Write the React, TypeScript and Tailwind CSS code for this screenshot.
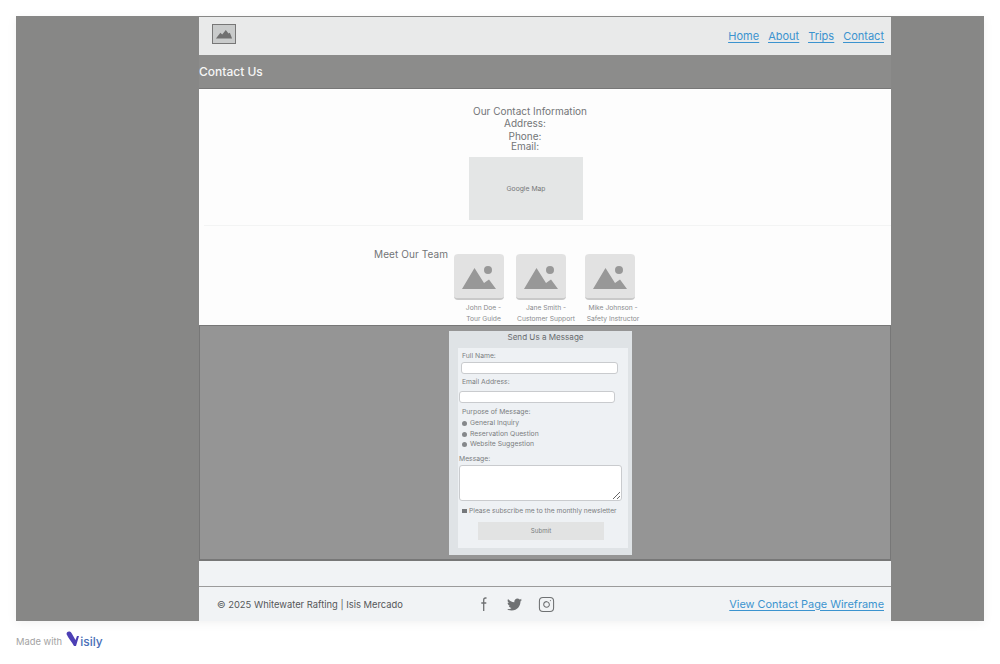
import { Instagram } from "lucide-react";
import { FaTwitter } from "react-icons/fa";

const team = [
  { name: "John Doe -", role: "Tour Guide", left: "ml-0", caption: "ml-[9px]" },
  { name: "Jane Smith -", role: "Customer Support", left: "ml-3", caption: "ml-[10px]" },
  { name: "Mike Johnson -", role: "Safety Instructor", left: "ml-[19px]", caption: "ml-[6px]" },
];

function MountainIcon() {
  return (
    <svg viewBox="0 0 50 46" className="h-[46px] w-[50px]">
      <path d="M8 35 L20.500 14 L30 29 L35 25.500 L42 35 Z" fill="#989898" />
      <circle cx="34" cy="16" r="4" fill="#989898" />
    </svg>
  );
}

function Radio({ label, dotClass }: { label: string; dotClass: string }) {
  return (
    <div className="flex h-[10.500px] items-center">
      <span className={`size-[5px] shrink-0 rounded-full bg-[#85888b] ${dotClass}`} />
      <span className="ml-[3px] text-[6.800px] leading-[10px] text-[#7b7e81]">{label}</span>
    </div>
  );
}

export default function App() {
  return (
    <div className="h-[664px] w-[1000px] overflow-hidden bg-white font-['Inter',sans-serif]">
      <div className="mx-4 mt-4 flex h-[605px] w-[968px] bg-[#878786] pl-[183px] pt-px shadow-[0_2px_10px_rgba(0,0,0,0.06)]">
        <div className="flex w-[692px] flex-col">
          <nav className="flex h-[38px] shrink-0 items-center justify-between bg-[#e9eaea] pl-[13px] pr-[7px]">
            <div className="mb-[4px] flex h-[20px] w-[24px] items-center justify-center border border-[#777] bg-[#c9cbcb]">
              <svg viewBox="0 0 24 20" className="h-[18px] w-[22px]">
                <path d="M3 15 L8 8.500 L10 10.500 L14 5.500 L17 9.500 L18.500 8.500 L21 15 Z" fill="#707070" />
              </svg>
            </div>
            <div className="flex gap-[9px] text-[11px] text-[#3b93cf] underline underline-offset-2">
              <a href="#">Home</a>
              <a href="#">About</a>
              <a href="#">Trips</a>
              <a href="#">Contact</a>
            </div>
          </nav>

          <div className="flex h-[34px] shrink-0 items-center border-b border-[#777] bg-[#8c8c8b] text-[12px] font-medium text-[#f6f6f6]">
            Contact Us
          </div>

          <section className="h-[236px] shrink-0 bg-[#fdfdfd]">
            <div className="ml-[5px] flex h-[137px] flex-col border-b border-[#f3f4f4] pl-[265px] text-[10px] leading-[12px] text-[#737577]">
              <p className="ml-[4px] mt-[16px] w-[114px] whitespace-nowrap text-center">Our Contact Information</p>
              <p className="w-[112px] text-center">Address:</p>
              <p className="mt-[1px] w-[112px] text-center">Phone:</p>
              <p className="mt-[-2px] w-[112px] text-center">Email:</p>
              <div className="mt-[5px] flex h-[63px] w-[114px] items-center justify-center bg-[#e4e6e6] text-[6.800px] text-[#767879]">
                Google Map
              </div>
            </div>
            <div className="flex pl-[175px] pt-[22px]">
              <p className="w-[80px] whitespace-nowrap text-[10px] leading-[12px] tracking-[0.1px] text-[#737577]">Meet Our Team</p>
              {team.map((m) => (
                <div key={m.name} className={`mt-[6px] flex w-[50px] ${m.left} flex-col items-center`}>
                  <div className="h-[46px] w-[50px] rounded-[4px] border-b-2 border-[#c9c9c9] bg-[#e2e2e2]">
                    <MountainIcon />
                  </div>
                  <p className={`mt-[3px] whitespace-nowrap text-[6.700px] leading-[11px] text-[#8a8c8e] ${m.caption}`}>{m.name}</p>
                  <p className={`whitespace-nowrap text-[6.700px] leading-[11px] text-[#8a8c8e] ${m.caption}`}>{m.role}</p>
                </div>
              ))}
            </div>
          </section>

          <section className="h-[236px] shrink-0 border border-b-2 border-[#777] bg-[#959595] pl-[249px] pt-[5px]">
            <form className="h-[224px] w-[183px] bg-[#dfe3e6]">
              <h2 className="h-[17px] pl-[10px] text-center text-[8.100px] leading-[13px] text-[#686b6e]">Send Us a Message</h2>
              <div className="ml-[9px] h-[200px] w-[170px] bg-[#eef1f4] text-[6.800px] text-[#7b7e81]">
                <p className="ml-[4px] pt-[3px] leading-[10px]">Full Name:</p>
                <input aria-label="Full Name" className="ml-[3px] mt-[1px] block h-[12px] w-[157px] rounded-[3px] border border-[#c9cbce] bg-white" />
                <p className="ml-[4px] mt-[3px] leading-[10px]">Email Address:</p>
                <input aria-label="Email Address" className="ml-[1px] mt-[4px] block h-[12px] w-[156px] rounded-[3px] border border-[#c9cbce] bg-white" />
                <p className="ml-[4px] mt-[4px] leading-[10px]">Purpose of Message:</p>
                <div className="ml-[4px] mt-[1px] flex flex-col">
                  <Radio label="General Inquiry" dotClass="" />
                  <Radio label="Reservation Question" dotClass="mt-[1px]" />
                  <Radio label="Website Suggestion" dotClass="mt-[1px]" />
                </div>
                <p className="ml-[1px] mt-[4px] leading-[10px]">Message:</p>
                <textarea aria-label="Message" className="ml-[1px] mt-[1px] block h-[36px] w-[163px] rounded-[3px] border border-[#c9cbce] bg-white" />
                <div className="ml-[4px] mt-[5px] flex items-center">
                  <span className="h-[4px] w-[5px] shrink-0 bg-[#75787b]" />
                  <span className="ml-[2px] whitespace-nowrap text-[6.700px] leading-[10px]">Please subscribe me to the monthly newsletter</span>
                </div>
                <button type="button" className="ml-[20px] mt-[6px] block h-[18px] w-[126px] bg-[#e2e3e3] text-[6.200px] text-[#7b7e81]">
                  Submit
                </button>
              </div>
            </form>
          </section>

          <div className="h-[26px] shrink-0 border-b border-[#9b9b9b] bg-[#f1f3f5]" />

          <footer className="flex h-[34px] shrink-0 items-center bg-[#f1f3f5] pl-[18px] pr-[7px] text-[#555759]">
            <p className="mt-[2px] w-[260px] text-[9.400px]">© 2025 Whitewater Rafting | Isis Mercado</p>
            <div className="flex items-center gap-[15px] text-[#6f7173]">
              <svg viewBox="0 0 15 15" className="size-[15px]" fill="none" stroke="currentColor" strokeWidth="1.300">
                <path d="M9.500 1 H8.500 C7.300 1 6.700 1.800 6.700 3 V14 M4.300 6 H9.300" />
              </svg>
              <FaTwitter size={15} />
              <Instagram size={17} strokeWidth={1.500} className="ml-[1px]" />
            </div>
            <a href="#" className="ml-auto text-[10.900px] text-[#3b93cf] underline underline-offset-2">
              View Contact Page Wireframe
            </a>
          </footer>
        </div>
      </div>

      <div className="ml-4 mt-[12px] flex items-center">
        <span className="text-[9.400px] text-[#a3a3a3]">Made with</span>
        <svg viewBox="0 0 14 16" className="ml-[4px] mt-[-6px] h-[16px] w-[14px]">
          <path d="M0.500 3 C1 0 4 0 5.500 2 L9.500 9 L11 5 L13 5 L10 15 L8 15 C6 11 2 7 0.500 3 Z" fill="#4c3fb5" />
        </svg>
        <span className="text-[12px] font-medium text-[#4a6fb8]">isily</span>
      </div>
    </div>
  );
}
